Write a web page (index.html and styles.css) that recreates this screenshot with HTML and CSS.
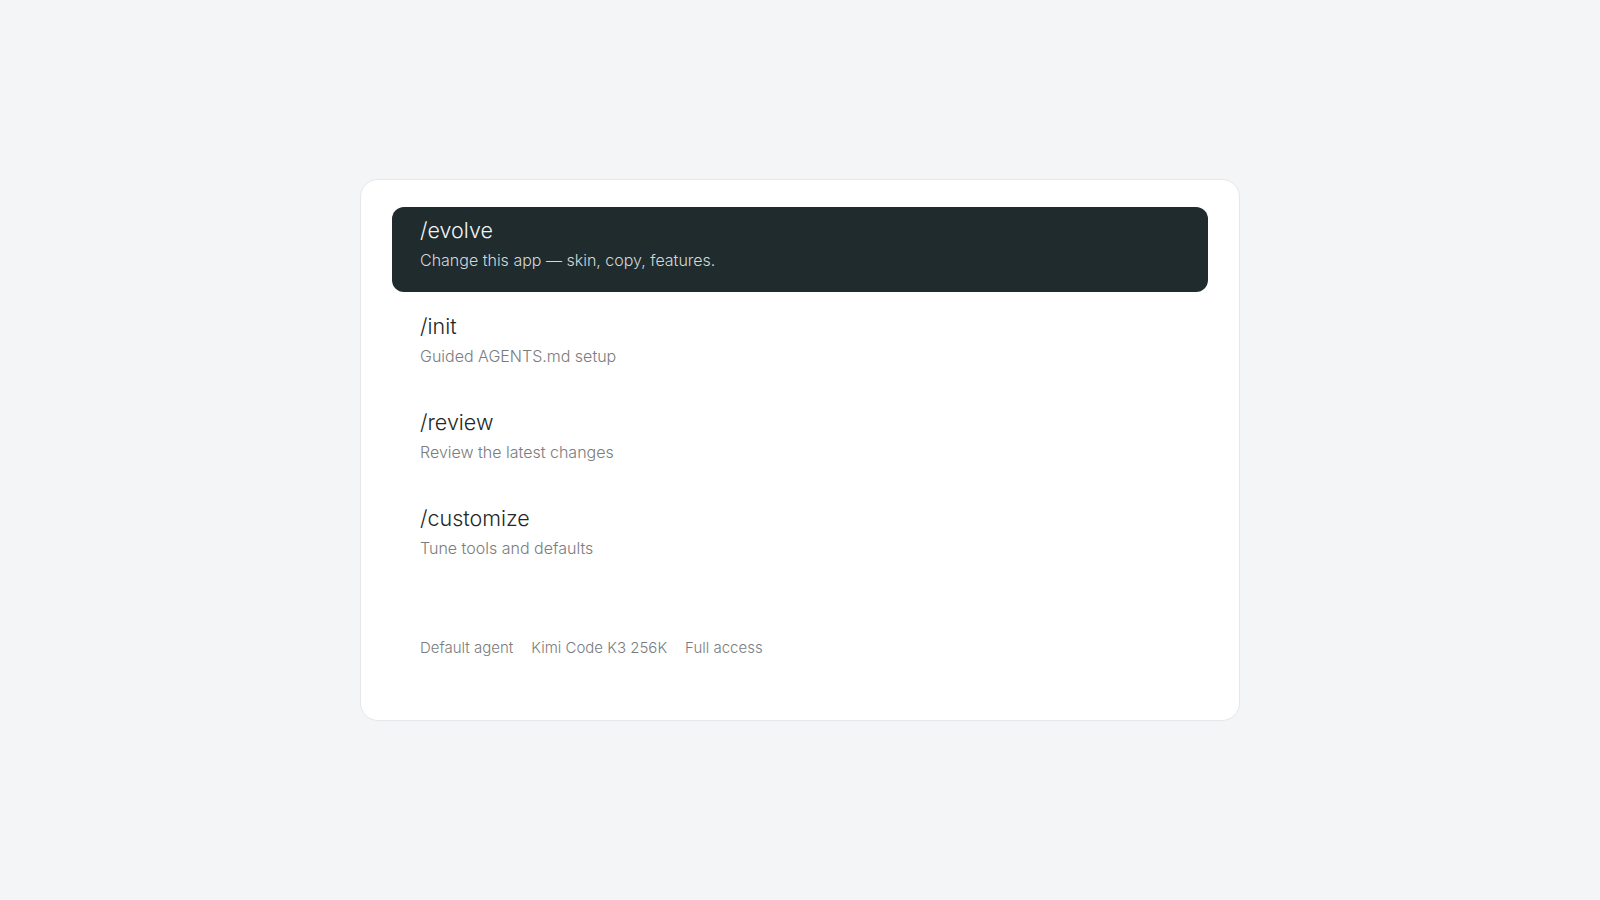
FILE: index.html
```html
<!DOCTYPE html>
<html>
  <head>
    <meta charset="utf-8">
    <meta name="viewport" content="width=device-width, initial-scale=1.0">
    <title>Commands</title>
    <link rel="stylesheet" href="styles.css">
  </head>

  <body>
    <main class="stage">
      <section class="palette">
        <!-- Command list -->
        <ul class="command-list">
          <li class="command active">
            <span class="command-name">/evolve</span>
            <span class="command-desc">Change this app — skin, copy, features.</span>
          </li>
          <li class="command">
            <span class="command-name">/init</span>
            <span class="command-desc">Guided AGENTS.md setup</span>
          </li>
          <li class="command">
            <span class="command-name">/review</span>
            <span class="command-desc">Review the latest changes</span>
          </li>
          <li class="command">
            <span class="command-name">/customize</span>
            <span class="command-desc">Tune tools and defaults</span>
          </li>
        </ul>

        <!-- Status line -->
        <div class="status-bar">
          <span>Default agent</span>
          <span>Kimi Code K3 256K</span>
          <span>Full access</span>
        </div>
      </section>
    </main>
  </body>
</html>
```

FILE: styles.css
```css
/* Reset / Global */
* {
  margin: 0;
  padding: 0;
  box-sizing: border-box;
}

body {
  font-family: Inter, "Noto Sans", sans-serif;
  font-weight: 350;
  background-color: #F4F5F7;
  color: #222627;
}

/* Stage => centers the palette card */
.stage {
  min-height: 100vh;
  display: flex;
  align-items: center;
  justify-content: center;
}

.palette {
  width: 880px;
  background-color: #FFFFFF;
  border: 1px solid #E6E7EA;
  border-radius: 18px;
  padding: 27px 31px 62px 31px;
}

/* Commands */
.command-list {
  list-style-type: none;
  display: flex;
  flex-direction: column;
  gap: 11px;
}
.command {
  display: flex;
  flex-direction: column;
  gap: 5px;
  padding: 9px 28px 21px 28px;
  border-radius: 12px;
}
.command-name {
  font-size: 21.5px;
  line-height: 28px;
  color: #232727;
}
.command-desc {
  font-size: 16px;
  line-height: 22px;
  color: #7A7C7E;
}
.command.active {
  background-color: #1F2B2D;
}
.command.active .command-name {
  color: #F2F4F4;
}
.command.active .command-desc {
  color: #D3D8D8;
}

/* Status line */
.status-bar {
  display: flex;
  gap: 18px;
  margin-top: 58px;
  padding: 0 28px;
  font-size: 15px;
  line-height: 20px;
  color: #7A7C7E;
}
```
